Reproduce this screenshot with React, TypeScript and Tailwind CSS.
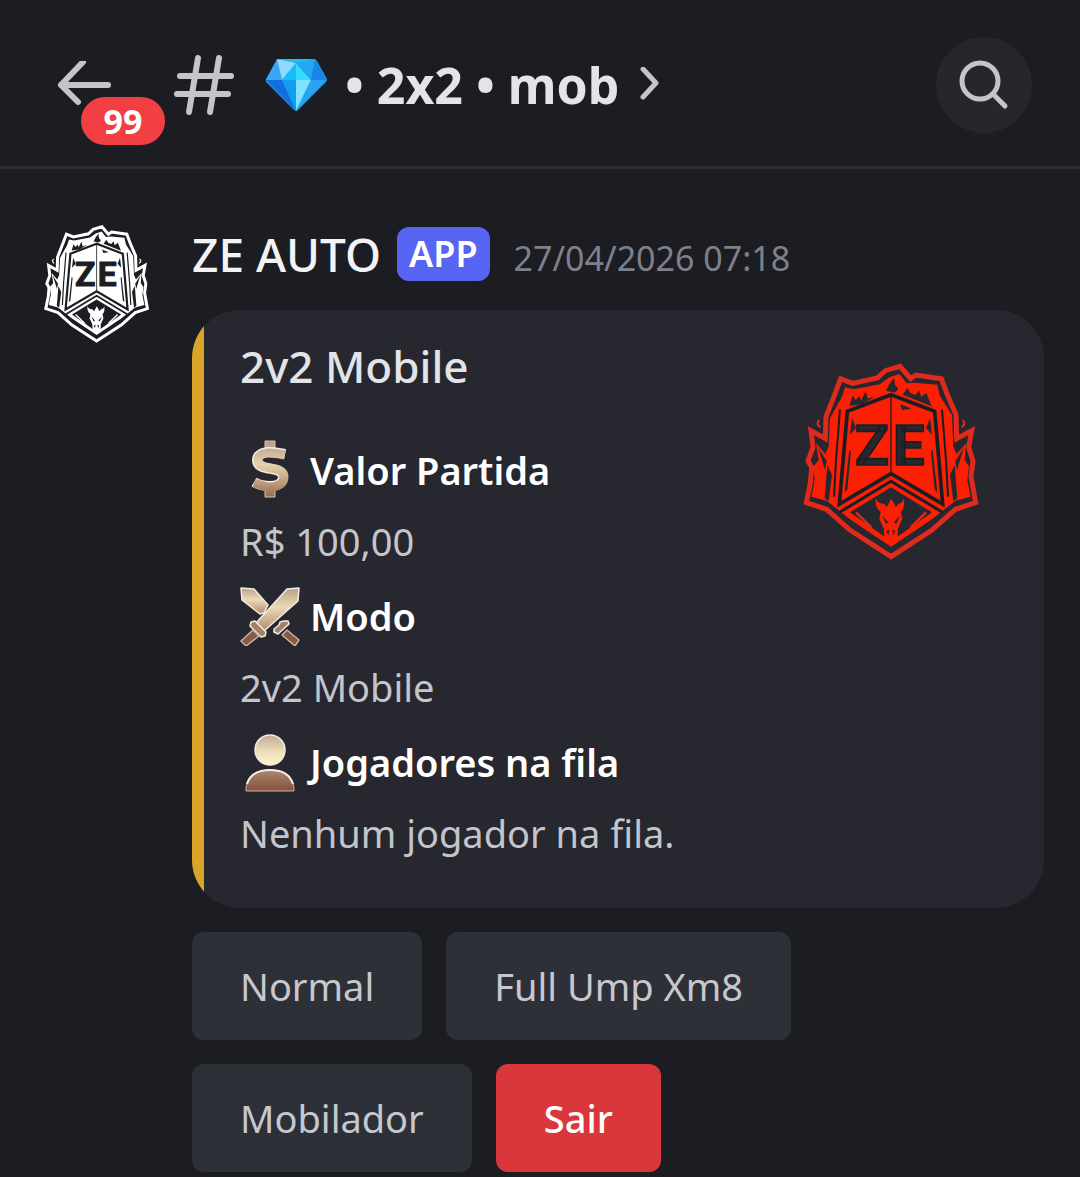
import type { ReactNode } from "react";

const FIELDS = [
  { name: "Valor Partida", value: "R$ 100,00", icon: DollarIcon },
  { name: "Modo", value: "2v2 Mobile", icon: SwordsIcon },
  { name: "Jogadores na fila", value: "Nenhum jogador na fila.", icon: PlayerIcon },
];

const ACTIONS = [
  { label: "Normal", danger: false },
  { label: "Full Ump Xm8", danger: false },
  { label: "Mobilador", danger: false },
  { label: "Sair", danger: true },
];

function DollarIcon() {
  return (
    <svg viewBox="0 0 60 60" className="size-15 shrink-0" aria-hidden="true">
      <defs>
        <linearGradient id="dollar" gradientUnits="userSpaceOnUse" x1="0" y1="2" x2="0" y2="58">
          <stop offset="0" stopColor="#b89c88" />
          <stop offset="0.4" stopColor="#e6d3ae" />
          <stop offset="0.65" stopColor="#c9a88a" />
          <stop offset="1" stopColor="#96694e" />
        </linearGradient>
      </defs>
      <path d="M25 1h10v10H25zM25 47h10v10H25z" fill="url(#dollar)" stroke="#d8c4b4" />
      <path
        d="M45 14C40 13 34 12 29 12c-8 0-12 4-12 8 0 13 26 5 26 17 0 6-5 9-13 9-6 0-11-1-16-4"
        fill="none"
        stroke="#f5ece2"
        strokeWidth="10"
      />
      <path
        d="M45 15C40 14 34 13 29 13c-7 0-11 3-11 7 0 12 26 4 26 17 0 6-6 10-14 10-6 0-11-2-16-4"
        fill="none"
        stroke="url(#dollar)"
        strokeWidth="9"
      />
    </svg>
  );
}

function SwordsIcon() {
  return (
    <svg viewBox="0 0 60 60" className="size-15 shrink-0" aria-hidden="true">
      <defs>
        <linearGradient id="blade" x1="0" y1="0" x2="0" y2="1">
          <stop offset="0" stopColor="#b8a08c" />
          <stop offset="0.45" stopColor="#eadbb4" />
          <stop offset="1" stopColor="#b18a70" />
        </linearGradient>
      </defs>
      <g stroke="#f4ece4" strokeWidth="1.5" strokeLinejoin="round">
        <path d="M1 2l13 1 14 16-4 8-4 1L2 14z" fill="url(#blade)" />
        <path d="M59 2l-1 13-34 30-8-8L47 3z" fill="url(#blade)" />
        <path d="M11 36l4-1 11 11-1 4-4 1-11-11z" fill="#a57e68" />
        <path d="M13 44l6 6-13 10-5-5z" fill="#885944" stroke="#cbb2a2" />
        <path d="M34 43l5-4 1-3 4-1 4 0 1 3-11 10-4-2z" fill="#a57e68" />
        <path d="M47 44l12 10-4 6-13-11z" fill="#885944" stroke="#cbb2a2" />
      </g>
    </svg>
  );
}

function PlayerIcon() {
  return (
    <svg viewBox="0 0 60 60" className="size-15 shrink-0" aria-hidden="true">
      <defs>
        <linearGradient id="head" x1="0" y1="0" x2="0" y2="1">
          <stop offset="0" stopColor="#c4aa94" />
          <stop offset="0.6" stopColor="#efe2bd" />
          <stop offset="1" stopColor="#fff2ce" />
        </linearGradient>
        <linearGradient id="torso" x1="0" y1="0" x2="0" y2="1">
          <stop offset="0" stopColor="#ad866d" />
          <stop offset="1" stopColor="#82533d" />
        </linearGradient>
      </defs>
      <circle cx="30" cy="18" r="15" fill="url(#head)" stroke="#f4eade" strokeWidth="1.5" />
      <path d="M6 59c-1-13 10-21 24-21s25 8 24 21z" fill="url(#torso)" stroke="#cbb4a4" />
      <path d="M7 52c3-10 12-14 23-14s20 4 23 14" fill="none" stroke="#f6efe8" strokeWidth="2" />
    </svg>
  );
}

function DiamondIcon() {
  return (
    <svg viewBox="0 0 62 54" className="h-[54px] w-[62px] shrink-0" aria-hidden="true">
      <path d="M13 1h36q2 0 3 2l10 18q0 2-1 3L33 52q-2 2-4 0L1 24q-1-1 0-3L11 3q1-2 2-2z" fill="#1896ee" />
      <path d="M12 1L1 22h16z" fill="#3aa4f5" />
      <path d="M12 1l19 4-14 17z" fill="#8fd9ff" />
      <path d="M12 1h38L31 5z" fill="#2db8f8" />
      <path d="M31 5L17 22h14z" fill="#16bdf8" />
      <path d="M31 5l15 17H31z" fill="#35dcff" />
      <path d="M50 1L31 5l15 17z" fill="#25a8f4" />
      <path d="M50 1l11 21H46z" fill="#1686e8" />
      <path d="M1 22h16l14 31z" fill="#146fdd" />
      <path d="M17 22h14v31z" fill="#129df3" />
      <path d="M31 22h15L31 53z" fill="#7de4ff" />
      <path d="M46 22h15L31 53z" fill="#2ba4ef" />
    </svg>
  );
}

interface CrestProps {
  id: string;
  className: string;
  ground: string;
  rim: string;
}

// The lettering on the crest sits on two panels that meet at a centre fold.
function Crest({ id, className, ground, rim }: CrestProps) {
  return (
    <svg viewBox="0 0 600 660" className={className} role="img" aria-labelledby={id}>
      <title id={id}>ZE</title>
      <path
        d="M303 620L180 540 110 478 49 458 61 400 65 352 54 333 69 292 63 242 106 266 108 200 134 134 152 86 187 100 262 84 286 62 330 49 350 72 362 86 378 75 454 86 472 134 498 194 500 266 545 242 536 292 549 333 543 380 557 458 496 478 426 540z"
        className={`${ground} ${rim}`}
        strokeWidth="15"
      />
      <path
        d="M165 112L190 118 270 103 298 82 328 72 350 100 374 98 442 104 450 138 486 195 490 290 500 312 528 280 524 330 537 350 532 390 542 440 496 452 426 508 303 590 180 508 110 452 64 440 74 390 70 350 86 330 78 280 106 312 116 290 120 205 156 140z"
        fill="currentColor"
      />
      {/* flames */}
      <g className={ground}>
        <path d="M178 168l10-32 9 14 12-12 4 14 14-28 6 22 22-6-38 22z" />
        <path d="M288 122l10-20 14-18 3 22 10 10-10 12z" />
        <path d="M338 134l14-20 9 15 15 6 12-14 5 20 16-12 16 40z" />
        <path d="M112 345l14 30-10 78-12-8z" />
        <path d="M494 345l-14 30 10 78 12-8z" />
        <path d="M84 292l26 42-5 26z" />
        <path d="M522 292l-26 42 5 26z" />
      </g>
      {/* pillar seams */}
      <path d="M150 178L138 330 132 440M456 178L468 330 474 440" fill="none" className="stroke-[#1c1d22]" strokeWidth="6" />
      {/* side sparks */}
      <path d="M88 210q-12 10 3 22M518 210q12 10-3 22" fill="none" className={rim} strokeWidth="6" />
      {/* raised panel */}
      <path
        d="M303 134L172 184 148 462 303 371 458 462 434 184z"
        fill="currentColor"
        className="stroke-[#1c1d22]"
        strokeWidth="11"
      />
      <g className={ground}>
        <path d="M186 204l12 30-18 20zM420 204l-12 30 18 20z" />
        <path d="M178 300l-14 125 8-6 11-115zM428 300l14 125-8-6-11-115z" />
        <path d="M330 162l34 14-27 4z" />
      </g>
      <path d="M303 140v228" className="stroke-[#1c1d22]" strokeWidth="4" />
      <g
        className={`${ground} stroke-[#1c1d22] font-['Roboto',sans-serif] font-bold`}
        strokeWidth="5"
        fontSize="168"
        textAnchor="middle"
      >
        <text x="246" y="344">Z</text>
        <text x="356" y="344">E</text>
      </g>
      {/* chevron and lower diamond */}
      <path d="M150 486L303 394 456 486" fill="none" className="stroke-[#1c1d22]" strokeWidth="9" />
      <path d="M180 487L303 412 426 487 303 574z" className={ground} />
      <path d="M244 532L198 487M362 532L408 487" fill="none" className={rim} strokeWidth="7" />
      {/* beast head */}
      <path
        d="M257 445q8 18 25 16l8 10 14-25 14 25 7-10q13 0 16-16 5 30-8 40l4 22-13 28-1 26-20 20-20-20-2-26-13-28 4-22q-17-10-15-40z"
        fill="currentColor"
      />
      <path
        d="M277 497l18 20-7 5zM330 497l-18 20 7 5zM289 543l9-4-3 17zM316 543l-9-4 3 17z"
        className={ground}
      />
    </svg>
  );
}

function ActionButton({ danger, children }: { danger: boolean; children: ReactNode }) {
  return (
    <button
      type="button"
      className={`h-27 rounded-xl px-12 text-[38px] ${
        danger ? "bg-[#da373c] font-medium text-white" : "bg-[#2e3038] text-[#c7c8ce]"
      }`}
    >
      {children}
    </button>
  );
}

function ChannelHeader() {
  return (
    <header className="flex h-[169px] items-center border-b-3 border-[#2c2d32] pt-1 pr-12 pl-14">
      <button type="button" aria-label="Voltar, 99 notificações" className="relative h-15 w-[118px] shrink-0">
        <svg viewBox="0 0 56 48" className="h-12 w-14" fill="none" stroke="#c4c5cb" strokeWidth="6" strokeLinecap="round" strokeLinejoin="round" aria-hidden="true">
          <path d="M52 24H5M27 1L5 24l17 17" />
        </svg>
        <span className="absolute top-[42px] left-[25px] flex h-12 w-21 items-center justify-center rounded-full bg-[#f23f43] text-[34px] font-bold text-white">
          99
        </span>
      </button>
      <svg viewBox="0 0 60 60" className="size-15 shrink-0" fill="none" stroke="#c4c5cb" strokeWidth="6" strokeLinecap="round" aria-hidden="true">
        <path d="M24 3L15 57M45 3l-9 54M6 21h51M3 39h51" />
      </svg>
      <button type="button" className="ml-[31px] flex items-center">
        <DiamondIcon />
        <h1 className="ml-[18px] text-[50px] font-bold whitespace-nowrap text-[#e3e4e8]">• 2x2 • mob</h1>
        <svg viewBox="0 0 20 36" className="ml-5 h-9 w-5" fill="none" stroke="#c4c5cb" strokeWidth="5" strokeLinecap="round" strokeLinejoin="round" aria-hidden="true">
          <path d="M4 2l13 14L4 30" />
        </svg>
      </button>
      <button type="button" aria-label="Buscar" className="ml-auto flex size-24 items-center justify-center rounded-full bg-[#26272c]">
        <svg viewBox="0 0 50 50" className="size-[50px]" fill="none" stroke="#c4c5cb" strokeWidth="5" strokeLinecap="round" aria-hidden="true">
          <circle cx="21" cy="21" r="18" />
          <path d="M34 34l12 12" />
        </svg>
      </button>
    </header>
  );
}

export default function App() {
  return (
    <div className="min-h-screen bg-[#1c1d22] font-['Noto_Sans',sans-serif]">
      <ChannelHeader />
      <main className="flex items-start gap-9 px-9 pt-12 pb-1">
        <Crest id="avatar" className="h-33 w-30 shrink-0 text-white" ground="fill-[#1c1d22]" rim="stroke-white" />
        <article className="min-w-0 flex-1 pt-[10px]">
          <div className="flex h-[54px] items-center">
            <h2 className="text-[46px] font-medium whitespace-nowrap text-[#f2f3f5]">ZE AUTO</h2>
            <span className="ml-4 flex h-[54px] items-center rounded-xl bg-[#5865f2] px-3 text-[36px] font-semibold text-white">
              APP
            </span>
            <time className="ml-6 pt-2 text-[34px] whitespace-nowrap text-[#7f808a]">27/04/2026 07:18</time>
          </div>

          <section className="mt-[29px] overflow-hidden rounded-[48px] bg-[#26272f]">
            <div className="flex items-start justify-between border-l-12 border-[#d9a428] pt-7 pr-[54px] pb-[46px] pl-9">
              <div>
                <h3 className="text-[44px] leading-14 font-medium text-[#e3e4e8]">2v2 Mobile</h3>
                <dl className="mt-[46px] flex flex-col gap-4">
                  {FIELDS.map((field) => (
                    <div key={field.name}>
                      <dt className="flex h-15 items-center gap-[10px] text-[38px] font-semibold text-white">
                        <field.icon />
                        {field.name}
                      </dt>
                      <dd className="mt-3 text-[38px] leading-[58px] text-[#c4c5cb]">{field.value}</dd>
                    </div>
                  ))}
                </dl>
              </div>
              <Crest id="thumbnail" className="mt-3 h-55 w-50 shrink-0 text-[#fb1f04]" ground="fill-[#26272f]" rim="stroke-[#e02a1c]" />
            </div>
          </section>

          <div className="mt-6 flex flex-wrap gap-6">
            {ACTIONS.map((action) => (
              <ActionButton key={action.label} danger={action.danger}>
                {action.label}
              </ActionButton>
            ))}
          </div>
        </article>
      </main>
    </div>
  );
}
